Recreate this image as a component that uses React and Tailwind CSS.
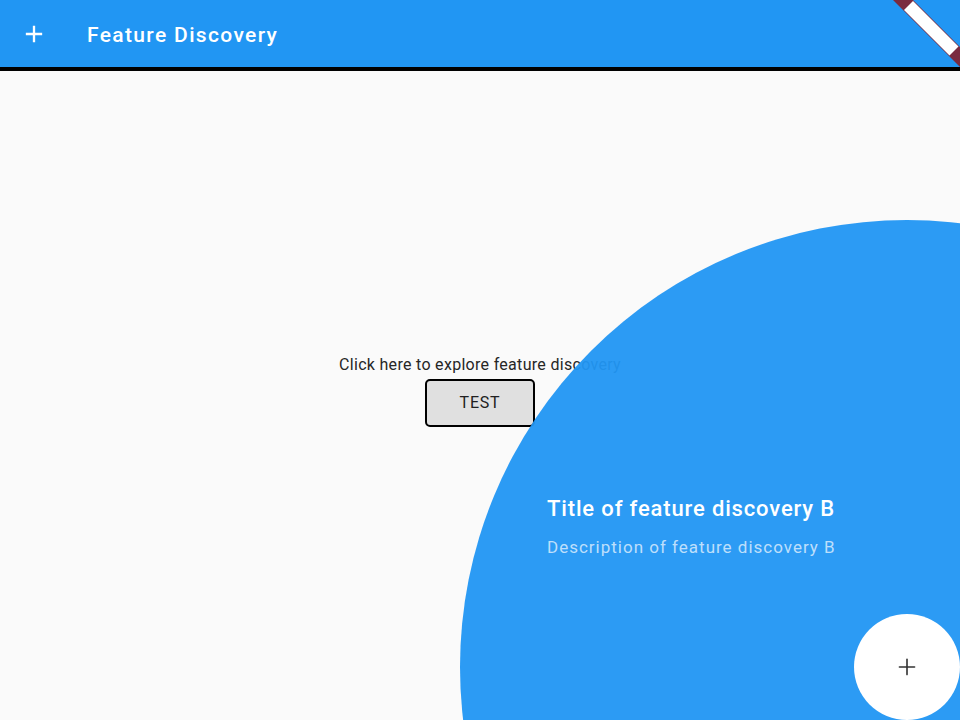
import { Plus } from 'lucide-react';

function AddIcon({ className }) {
    return (
        <svg viewBox="0 0 24 24" className={className} fill="currentColor">
            <path d="M19 13h-6v6h-2v-6H5v-2h6V5h2v6h6v2z" />
        </svg>
    );
}

function DebugRibbon() {
    return (
        <svg width="100" height="67" viewBox="0 0 100 67" className="absolute top-0 right-0">
            <polygon points="33,0 53,0 100,47 100,67" fill="#7A2B40" />
            <polygon points="44,10 53,1 98.5,46.5 89.5,55.5" fill="#ffffff" />
        </svg>
    );
}

export default function App() {
    return (
        <div
            className="relative w-[960px] h-[720px] overflow-hidden bg-[#fafafa] flex flex-col"
            style={{ fontFamily: 'Roboto, "Liberation Sans", sans-serif' }}
        >
            {/* App bar */}
            <header className="relative h-[71px] shrink-0 bg-[#2196F3] border-b-4 border-black flex items-center">
                <div className="w-[67px] flex items-center justify-center">
                    <AddIcon className="w-[28px] h-[28px] text-white" />
                </div>
                <h1 className="ml-[20px] pt-[3px] text-[21px] tracking-[1.35px] font-medium text-white leading-none">Feature Discovery</h1>
                <DebugRibbon />
            </header>

            {/* Body */}
            <main className="flex-1 flex flex-col items-center pt-[284px]">
                <p className="text-[16px] leading-[19px] tracking-[0.3px] text-[#262626]">Click here to explore feature discovery</p>
                <button className="mt-[5px] w-[110px] h-[48px] border-2 border-black rounded-[5px] bg-[#e0e0e0] text-[16px] tracking-[0.8px] text-[#212121]">
                    TEST
                </button>
            </main>

            {/* Feature discovery overlay */}
            <div className="absolute left-[460px] top-[220px] w-[894px] h-[894px] rounded-full bg-[#2196F3]/95" />
            <div className="absolute left-[547px] top-[495px] flex flex-col">
                <h2 className="text-[22px] leading-[28px] tracking-[0.85px] font-medium text-white">Title of feature discovery B</h2>
                <p className="mt-[14px] text-[17px] leading-[20px] tracking-[1px] text-white/70">Description of feature discovery B</p>
            </div>
            <div className="absolute left-[854px] top-[614px] w-[106px] h-[106px] rounded-full bg-white flex items-center justify-center">
                <Plus size={26} strokeWidth={1.5} color="#333333" />
            </div>
        </div>
    );
}
